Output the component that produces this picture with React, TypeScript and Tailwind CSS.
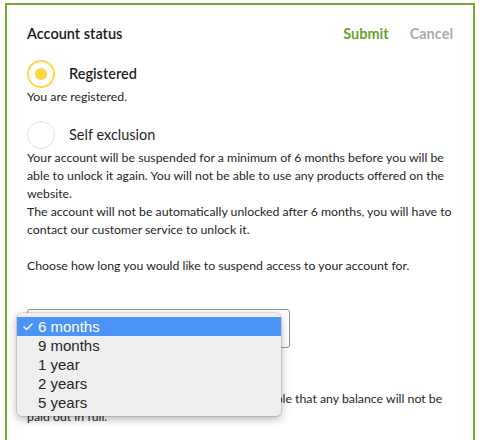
import { Check } from 'lucide-react';

const OPTIONS = ['6 months', '9 months', '1 year', '2 years', '5 years'];

function Radio({ checked }: { checked?: boolean }) {
  if (checked) {
    return (
      <span className="flex h-[28px] w-[28px] shrink-0 items-center justify-center rounded-full border-2 border-[#fcd84a] bg-white">
        <span className="h-[12px] w-[12px] rounded-full bg-[#fcd443]" />
      </span>
    );
  }
  return <span className="h-[28px] w-[28px] shrink-0 rounded-full border-[1.5px] border-[#e0e0e0] bg-white" />;
}

function SelectMenu() {
  return (
    <div className="absolute left-[17px] top-[313px] w-[264px] rounded-[5px] bg-[#efefef] py-[4px] font-['Liberation_Sans',Arial,sans-serif] text-[15px] text-[#262626] shadow-[0_3px_10px_rgba(0,0,0,0.3)] ring-1 ring-black/10">
      {OPTIONS.map((opt, i) => (
        <div
          key={opt}
          className={`relative flex h-[19px] items-center pl-[21px] leading-[19px] ${i === 0 ? 'bg-[#4b93f5] text-white' : ''}`}
        >
          {i === 0 && <Check className="absolute left-[5px] top-[4px] h-[12px] w-[12px]" strokeWidth={3} />}
          {opt}
        </div>
      ))}
    </div>
  );
}

export default function App() {
  return (
    <div className="relative h-[440px] w-[480px] overflow-hidden bg-white font-['Lato',sans-serif] text-[#1f1f1f]">
      <div className="ml-[5px] mt-[3px] h-[437px] w-[470px] border-2 border-b-0 border-[#74ab3a] px-[20px] pt-[19px]">
        <div className="flex h-[20px] items-center justify-between">
          <h2 className="text-[14.5px] font-semibold text-[#1a1a1a]">Account status</h2>
          <div className="flex items-center gap-[21px] text-[14.5px] font-bold">
            <button className="text-[#6aa232]">Submit</button>
            <button className="text-[#a6b0ad]">Cancel</button>
          </div>
        </div>

        <label className="mt-[16px] flex h-[28px] items-center gap-[14px]">
          <Radio checked />
          <span className="text-[14.5px] font-semibold">Registered</span>
        </label>
        <p className="text-[12.3px] leading-[18px]">You are registered.</p>

        <label className="mt-[15px] flex h-[28px] items-center gap-[14px]">
          <Radio />
          <span className="text-[14.5px]">Self exclusion</span>
        </label>
        <p className="text-[12.3px] leading-[18px]">
          Your account will be suspended for a minimum of 6 months before you will be able to unlock it again. You will
          not be able to use any products offered on the website.
          <br />
          The account will not be automatically unlocked after 6 months, you will have to contact our customer service
          to unlock it.
          <br />
          <br />
          Choose how long you would like to suspend access to your account for.
        </p>

        <div className="mt-[34px] h-[39px] w-[263px] rounded-[3px] border border-[#8e9c86] bg-white" />

        <p className="mt-[42px] whitespace-nowrap text-[12.3px] leading-[18px]">
          Please note that when self excluding it is possible that any balance will not be
          <br />
          paid out in full.
        </p>
      </div>
      <SelectMenu />
    </div>
  );
}
